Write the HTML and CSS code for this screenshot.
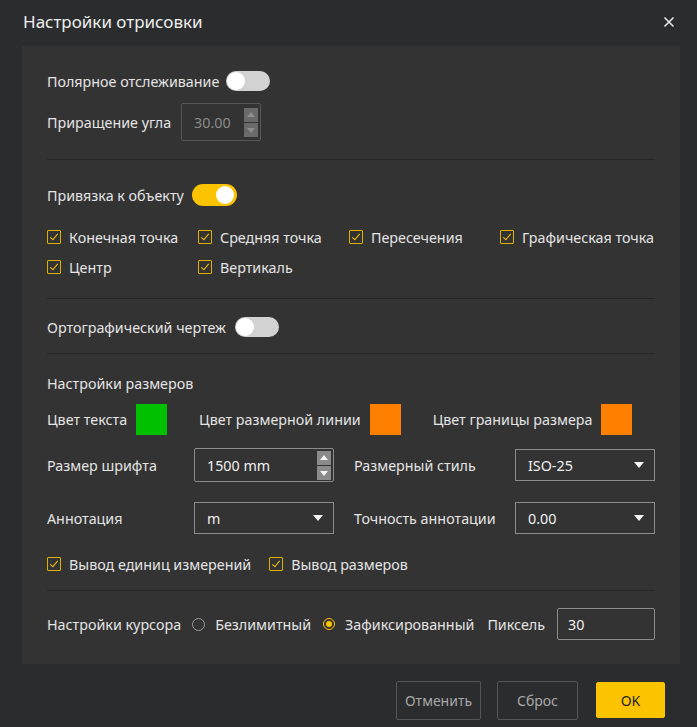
FILE: index.html
```html
<!DOCTYPE html>
<html lang="ru">
<head>
    <meta charset="UTF-8">
    <title>Настройки отрисовки</title>
    <link rel="stylesheet" href="styles.css">
</head>
<body>
<div class="dialog">
    <div class="title-bar">
        <span class="title">Настройки отрисовки</span>
        <span class="close">
            <svg width="12" height="12" viewBox="0 0 12 12"><path d="M1.5 1.5 L10.5 10.5 M10.5 1.5 L1.5 10.5" stroke="#e8e8e8" stroke-width="1.6"/></svg>
        </span>
    </div>

    <div class="panel">
        <!-- полярное отслеживание -->
        <div class="section sec-polar">
            <div class="row toggle-row">
                <span class="label">Полярное отслеживание</span>
                <span class="toggle"></span>
            </div>
            <div class="row angle-row">
                <span class="label">Приращение угла</span>
                <div class="spin disabled">
                    <span class="spin-value">30.00</span>
                    <span class="spin-btns">
                        <span class="spin-btn up"></span>
                        <span class="spin-btn down"></span>
                    </span>
                </div>
            </div>
        </div>

        <div class="divider"></div>

        <!-- привязка -->
        <div class="section sec-snap">
            <div class="row toggle-row">
                <span class="label">Привязка к объекту</span>
                <span class="toggle on"></span>
            </div>
            <div class="check-grid">
                <label class="check"><span class="box"></span>Конечная точка</label>
                <label class="check"><span class="box"></span>Средняя точка</label>
                <label class="check"><span class="box"></span>Пересечения</label>
                <label class="check"><span class="box"></span>Графическая точка</label>
                <label class="check"><span class="box"></span>Центр</label>
                <label class="check"><span class="box"></span>Вертикаль</label>
            </div>
        </div>

        <div class="divider"></div>

        <div class="section sec-ortho">
            <div class="row toggle-row">
                <span class="label">Ортографический чертеж</span>
                <span class="toggle"></span>
            </div>
        </div>

        <div class="divider"></div>

        <!-- размеры -->
        <div class="section sec-dims">
            <div class="row heading">Настройки размеров</div>
            <div class="row color-row">
                <span class="color-item">Цвет текста <span class="swatch green"></span></span>
                <span class="color-item">Цвет размерной линии <span class="swatch orange"></span></span>
                <span class="color-item">Цвет границы размера <span class="swatch orange"></span></span>
            </div>
            <div class="form-grid">
                <span class="label">Размер шрифта</span>
                <div class="spin">
                    <span class="spin-value">1500 mm</span>
                    <span class="spin-btns">
                        <span class="spin-btn up"></span>
                        <span class="spin-btn down"></span>
                    </span>
                </div>
                <span class="label">Размерный стиль</span>
                <div class="select">ISO-25<span class="caret"></span></div>

                <span class="label">Аннотация</span>
                <div class="select">m<span class="caret"></span></div>
                <span class="label">Точность аннотации</span>
                <div class="select">0.00<span class="caret"></span></div>
            </div>
            <div class="row units-row">
                <label class="check"><span class="box"></span>Вывод единиц измерений</label>
                <label class="check"><span class="box"></span>Вывод размеров</label>
            </div>
        </div>

        <div class="divider"></div>

        <div class="section sec-cursor">
            <div class="row cursor-row">
                <span class="label">Настройки курсора</span>
                <label class="radio"><span class="dot"></span>Безлимитный</label>
                <label class="radio"><span class="dot on"></span>Зафиксированный</label>
                <span class="label px-label">Пиксель</span>
                <div class="text-input">30</div>
            </div>
        </div>
    </div>

    <div class="footer">
        <button class="btn cancel">Отменить</button>
        <button class="btn reset">Сброс</button>
        <button class="btn ok">OK</button>
    </div>
</div>
</body>
</html>
```

FILE: styles.css
```css
:root {
    --outer-bg: #2b2c2e;
    --panel-bg: #333333;
    --text-main: #e4e4e4;
    --accent: #fcc400;
    --line: #262626;
}

body {
    margin: 0;
    background-color: var(--outer-bg);
    font-family: 'Noto Sans', 'Open Sans', sans-serif;
    font-size: 14.3px;
    color: var(--text-main);
}

.dialog {
    width: 697px;
    height: 727px;
    display: flex;
    flex-direction: column;
}

.title-bar {
    height: 46px;
    display: flex;
    align-items: center;
    justify-content: space-between;
    padding: 0 22px 0 23px;
    box-sizing: border-box;
}

.title {
    font-size: 17px;
    color: #eeeeee;
    margin-top: -3px;
}

.close {
    display: flex;
    margin-top: -2px;
}

.panel {
    margin: 0 17px 0 22px;
    padding: 0 25px;
    background-color: var(--panel-bg);
}

.divider {
    height: 1px;
    background-color: var(--line);
}

.row {
    display: flex;
    align-items: center;
}

.label {
    white-space: nowrap;
}

/* секции */
.sec-polar { padding: 25px 0 18px; }
.sec-polar .toggle-row { height: 20px; }
.sec-polar .toggle { margin-left: 7px; }
.angle-row { margin-top: 12px; }
.angle-row .spin { margin-left: 10px; width: 80px; height: 38px; }

.sec-snap { padding: 24px 0 21px; }
.sec-snap .toggle-row { height: 22px; }
.sec-snap .toggle { margin-left: 8px; }

.sec-ortho { padding: 18px 0 16px; }
.sec-ortho .toggle-row { height: 20px; }
.sec-ortho .toggle { margin-left: 9px; }

.sec-dims { padding: 19px 0 16px; }
.sec-cursor { padding: 17px 0 24px; }

/* переключатель */
.toggle {
    width: 44px;
    height: 20px;
    border-radius: 10px;
    background-color: #d2d2d2;
    position: relative;
    display: inline-block;
}

.toggle::after {
    content: '';
    position: absolute;
    top: 1px;
    left: 1px;
    width: 18px;
    height: 18px;
    border-radius: 50%;
    background-color: #ffffff;
}

.sec-snap .toggle { width: 45px; height: 22px; border-radius: 11px; }

.toggle.on {
    background-color: var(--accent);
}

.toggle.on::after {
    left: auto;
    right: 3px;
    top: 2px;
}

/* чекбоксы */
.check-grid {
    display: grid;
    grid-template-columns: repeat(4, 151px);
    row-gap: 10px;
    margin-top: 21px;
}

.check {
    display: flex;
    align-items: center;
    height: 20px;
    white-space: nowrap;
}

.box {
    width: 12px;
    height: 12px;
    border: 1.5px solid #e0b000;
    border-radius: 1px;
    margin-right: 8px;
    position: relative;
    flex-shrink: 0;
}

.box::after {
    content: '';
    position: absolute;
    left: 3.5px;
    top: 0.5px;
    width: 3px;
    height: 7px;
    border: solid var(--accent);
    border-width: 0 1.6px 1.6px 0;
    transform: rotate(40deg);
}

/* размеры */
.heading { height: 20px; }

.color-row {
    margin-top: 11px;
    gap: 32px;
}

.color-item {
    display: flex;
    align-items: center;
    gap: 9px;
}

.swatch {
    width: 31px;
    height: 31px;
    display: inline-block;
}

.swatch.green { background-color: #00c000; }
.swatch.orange { background-color: #ff8000; }

.form-grid {
    display: grid;
    grid-template-columns: 147px 140px 181px 140px;
    grid-template-rows: 34px 32px;
    row-gap: 20px;
    align-items: center;
    margin-top: 13px;
}

.form-grid .label:nth-child(3),
.form-grid .label:nth-child(7) {
    margin-left: 20px;
}

.spin {
    height: 34px;
    border: 1px solid #8c8c8c;
    border-radius: 2px;
    box-sizing: border-box;
    display: flex;
    align-items: center;
    justify-content: space-between;
    padding: 0 2px 0 12px;
    color: #f0f0f0;
}

.spin.disabled {
    border-color: #575757;
    color: #8a8a8a;
}

.spin-btns {
    display: flex;
    flex-direction: column;
    gap: 1px;
    align-self: stretch;
    justify-content: center;
}

.spin-btn {
    width: 14px;
    height: 14px;
    background-color: #8a8a8a;
    position: relative;
}

.spin.disabled .spin-btn {
    background-color: #6a6a6a;
}

.spin-btn::after {
    content: '';
    position: absolute;
    left: 3px;
    width: 0;
    height: 0;
    border-left: 4px solid transparent;
    border-right: 4px solid transparent;
}

.spin-btn.up::after {
    top: 4px;
    border-bottom: 5px solid #f4f4f4;
}

.spin-btn.down::after {
    top: 5px;
    border-top: 5px solid #f4f4f4;
}

.spin.disabled .spin-btn.up::after { border-bottom-color: #8d8d8d; }
.spin.disabled .spin-btn.down::after { border-top-color: #8d8d8d; }

.select {
    height: 32px;
    border: 1px solid #8c8c8c;
    box-sizing: border-box;
    display: flex;
    align-items: center;
    justify-content: space-between;
    padding: 0 10px 0 12px;
    color: #f0f0f0;
}

.caret {
    width: 0;
    height: 0;
    border-left: 5px solid transparent;
    border-right: 5px solid transparent;
    border-top: 6px solid #f4f4f4;
}

.units-row {
    margin-top: 20px;
}

.units-row .check:first-child {
    margin-right: 18px;
}

/* курсор */
.cursor-row {
    height: 32px;
}

.radio {
    display: flex;
    align-items: center;
    white-space: nowrap;
    margin-left: 11px;
}

.dot {
    width: 11px;
    height: 11px;
    border: 1px solid #9a9a9a;
    border-radius: 50%;
    margin-right: 10px;
    box-sizing: content-box;
    position: relative;
}

.dot.on {
    border: 1.5px solid var(--accent);
    width: 10px;
    height: 10px;
    margin-left: 1px;
}

.dot.on::after {
    content: '';
    position: absolute;
    left: 2px;
    top: 2px;
    width: 6px;
    height: 6px;
    border-radius: 50%;
    background-color: var(--accent);
}

.px-label {
    margin-left: 13px;
}

.text-input {
    margin-left: 12px;
    flex: 1;
    height: 32px;
    border: 1px solid #8c8c8c;
    border-radius: 2px;
    box-sizing: border-box;
    display: flex;
    align-items: center;
    padding-left: 10px;
    color: #f0f0f0;
}

/* кнопки */
.footer {
    display: flex;
    justify-content: flex-end;
    gap: 16px;
    padding: 17px 32px 0 0;
}

.btn {
    height: 39px;
    padding: 0;
    background: transparent;
    border: 1px solid #555555;
    border-radius: 2px;
    font-family: 'Noto Sans', 'Open Sans', sans-serif;
    font-size: 14px;
    color: #a8a8a8;
}

.btn.cancel {
    width: 85px;
}

.btn.reset {
    width: 81px;
    margin-right: 2px;
}

.btn.ok {
    width: 69px;
    height: 36px;
    margin-top: 1px;
    background-color: var(--accent);
    border-color: var(--accent);
    color: #222222;
}
```
